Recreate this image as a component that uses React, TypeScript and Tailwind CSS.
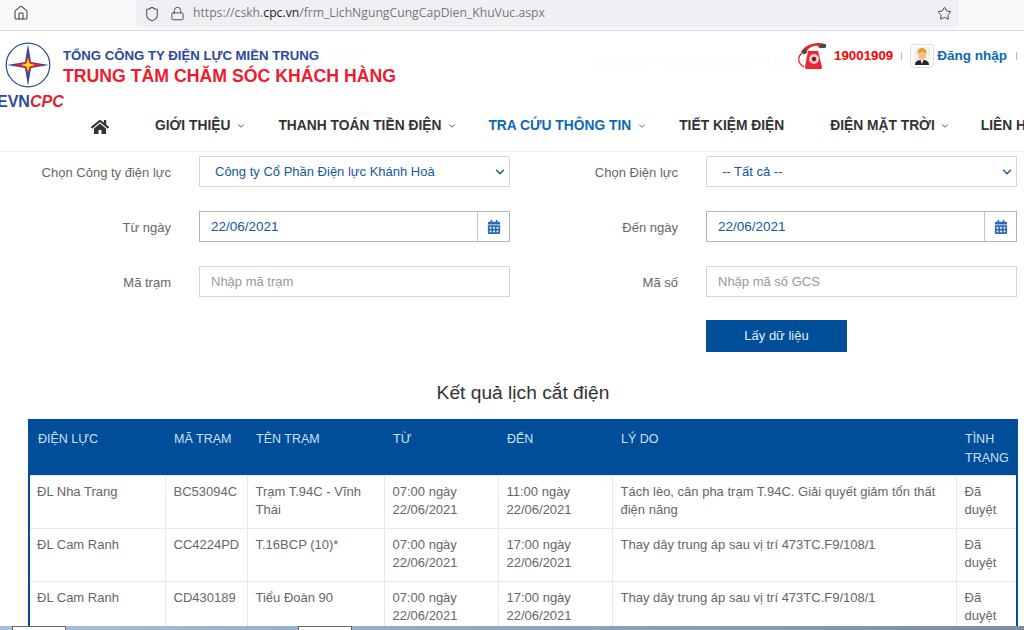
import { ChevronDown, Home, Lock, Shield, Star } from "lucide-react";
import { FaCalendarAlt, FaHome } from "react-icons/fa";

const rows = [
  {
    unit: "ĐL Nha Trang",
    code: "BC53094C",
    name: "Trạm T.94C - Vĩnh Thái",
    from: "07:00",
    to: "11:00",
    reason: "Tách lèo, cân pha trạm T.94C. Giải quyết giảm tổn thất điện năng",
  },
  {
    unit: "ĐL Cam Ranh",
    code: "CC4224PD",
    name: "T.16BCP (10)*",
    from: "07:00",
    to: "17:00",
    reason: "Thay dây trung áp sau vị trí 473TC.F9/108/1",
  },
  {
    unit: "ĐL Cam Ranh",
    code: "CD430189",
    name: "Tiểu Đoàn 90",
    from: "07:00",
    to: "17:00",
    reason: "Thay dây trung áp sau vị trí 473TC.F9/108/1",
  },
];

const Logo = () => (
  <svg width="46" height="46" viewBox="0 0 46 46" className="block shrink-0">
    <circle cx="23" cy="23" r="21.8" fill="#fff" stroke="#2f5597" strokeWidth="1.3" />
    <polygon points="23,2 26,20 44,23 26,26 23,44 20,26 2,23 20,20" fill="#2b4a9b" />
    <polygon points="23,13 25.500,20.500 38,23 25.500,25.500 23,33 20.500,25.500 8,23 20.500,20.500" fill="#e5202e" />
    <polygon points="23,16 24.500,21.500 30,23 24.500,24.500 23,30 21.500,24.500 16,23 21.500,21.500" fill="#ffdd17" />
  </svg>
);

const Phone = () => (
  <svg width="29" height="28" viewBox="0 0 29 28" className="shrink-0">
    <path d="M3 10C7 3 17 -1 27 2l0 3-6 1-1-2C15 3 10 6 8 11Z" fill="#e8222e" />
    <rect x="4" y="8" width="5" height="4" rx="1" fill="#4b4b4b" transform="rotate(-25 6 10)" />
    <rect x="22" y="2" width="6" height="4" rx="1" fill="#4b4b4b" />
    <path d="M4 11C-1 15 0 22 6 25" fill="none" stroke="#e8222e" strokeWidth="1.2" />
    <path d="M10 9h10l4 16c0 2-1 2-2 2H9c-1 0-2 0-2-2Z" fill="#ea2430" />
    <circle cx="16" cy="17" r="5" fill="#f6c4c4" />
    <circle cx="16" cy="17" r="2.200" fill="#7c1d1d" />
  </svg>
);

const Avatar = () => (
  <div className="flex h-6 w-6 items-center justify-center rounded border border-[#ddd] bg-white">
    <svg width="16" height="18" viewBox="0 0 16 18">
      <rect x="0" y="0" width="16" height="18" fill="#f3f1ea" />
      <path d="M1 18c0-4 3-5 7-5s7 1 7 5Z" fill="#22262c" />
      <path d="M6.500 13h3L8 17Z" fill="#fff" />
      <ellipse cx="8" cy="8" rx="4" ry="5" fill="#f3c08c" />
      <path d="M3.500 7C3 2 6 1 8 1s5 1 4.500 6C11 4 5 4 3.500 7Z" fill="#e0a02a" />
    </svg>
  </div>
);

const Field = ({ label, width, children }: { label: string; width: string; children: React.ReactNode }) => (
  <div className="flex items-center">
    <label className={`${width} shrink-0 pr-7 pt-[3px] text-right text-[#666]`}>{label}</label>
    {children}
  </div>
);

const SelectBox = ({ value }: { value: string }) => (
  <div className="flex h-[31px] w-[311px] items-center justify-between border border-[#d6d6d6] pl-[15px] pr-[2px] text-[#14589f]">
    <span className="pt-[2px]">{value}</span>
    <ChevronDown size={14} strokeWidth={2.5} className="text-[#1f5a96]" />
  </div>
);

const DateBox = ({ value }: { value: string }) => (
  <div className="flex h-[31px] w-[311px] items-center border border-[#b4b4b4] text-[13.500px] text-[#14589f]">
    <span className="flex-1 pl-[11px] pt-[2px]">{value}</span>
    <span className="flex h-full w-8 items-center justify-center border-l border-[#c4c4c4]">
      <FaCalendarAlt size={14} className="text-[#2a6cb0]" />
    </span>
  </div>
);

const TextBox = ({ placeholder }: { placeholder: string }) => (
  <input
    placeholder={placeholder}
    className="h-[31px] w-[311px] border border-[#d6d6d6] px-[11px] outline-none placeholder:text-[#999]"
  />
);

const Th = ({ children }: { children: React.ReactNode }) => (
  <th className="px-[9px] pt-[11px] align-top text-[12.500px] leading-[18.500px] font-normal text-[#cfe0f2] first:pl-2">{children}</th>
);

const Td = ({ children }: { children: React.ReactNode }) => (
  <td className="border border-[#e8e8e8] px-2 pt-[7px] align-top first:pl-[7px]">{children}</td>
);

export default function App() {
  return (
    <div className="flex h-[630px] w-[1024px] flex-col overflow-hidden bg-white font-['Liberation_Sans',Arial,sans-serif] text-[13px] leading-[18.500px]">
      <div className="flex h-[31px] shrink-0 items-start border-b border-[#dcdcde] bg-[#f9f9fb] pl-[13px]">
        <Home size={16} strokeWidth={1.6} className="mt-[5px] text-[#444]" />
        <div className="ml-[107px] flex h-[27px] w-[823px] items-center rounded-b bg-[#f0f0f4] pl-2 pr-[7px] font-['Open_Sans',sans-serif] text-[12.200px] text-[#777]">
          <Shield size={16} strokeWidth={1.6} className="text-[#555]" />
          <Lock size={15} strokeWidth={1.6} className="ml-[10px] text-[#555]" />
          <span className="ml-2 flex-1">
            https://cskh.<span className="text-[#222]">cpc.vn</span>/frm_LichNgungCungCapDien_KhuVuc.aspx
          </span>
          <Star size={15} strokeWidth={1.6} className="text-[#444]" />
        </div>
      </div>

      <div className="relative flex h-[74px] shrink-0 pl-[5px] pt-[11px]">
        <span className="absolute left-[5px] top-[20px] text-[16px] whitespace-nowrap text-[#fffbf9]">
          LỊCH NGỪNG CUNG CẤP ĐIỆN THEO KHU VỰC
        </span>
        <span className="absolute left-[589px] top-[22px] whitespace-nowrap text-[#fcfcfc]">
          Trang chủ / Tra cứu thông tin / Lịch ngừng cung cấp / Điện theo khu vực
        </span>
        <div className="relative w-[46px]">
          <Logo />
          <div className="ml-[-8px] mt-[5px] text-[16px] leading-[18px] font-bold whitespace-nowrap text-[#2b4a9b]">
            EVN<span className="text-[#e5202e] italic">CPC</span>
          </div>
        </div>
        <div className="relative ml-3 mt-[5px] whitespace-nowrap">
          <div className="text-[13.200px] leading-[18px] font-bold text-[#2b4a9b]">TỔNG CÔNG TY ĐIỆN LỰC MIỀN TRUNG</div>
          <div className="text-[17.700px] leading-[22px] font-bold text-[#ed1c2e]">TRUNG TÂM CHĂM SÓC KHÁCH HÀNG</div>
        </div>
        <div className="relative ml-auto mr-[7px] flex h-7 items-center">
          <Phone />
          <span className="ml-[7px] text-[13.300px] font-bold text-[#f00]">19001909</span>
          <span className="ml-2 h-2 w-px bg-[#bbb]" />
          <span className="ml-2">
            <Avatar />
          </span>
          <span className="ml-[3px] text-[13.500px] font-bold text-[#0a6ab5]">Đăng nhập</span>
          <span className="ml-[9px] h-2 w-px bg-[#bbb]" />
        </div>
      </div>

      <div className="flex h-[47px] shrink-0 items-start border-b border-[#eee] pl-[91px] pt-[12px] text-[13.800px] font-bold whitespace-nowrap text-[#333]">
        <FaHome size={18} className="mt-[1px] shrink-0" />
        <span className="ml-[46px] shrink-0">GIỚI THIỆU</span>
        <ChevronDown size={10} className="ml-[6px] mt-1 shrink-0" />
        <span className="ml-[32px] shrink-0">THANH TOÁN TIỀN ĐIỆN</span>
        <ChevronDown size={10} className="ml-[6px] mt-1 shrink-0" />
        <span className="ml-[31px] shrink-0 text-[#0a6ab5]">TRA CỨU THÔNG TIN</span>
        <ChevronDown size={10} className="ml-[6px] mt-1 shrink-0 text-[#0a6ab5]" />
        <span className="ml-[32px] shrink-0">TIẾT KIỆM ĐIỆN</span>
        <span className="ml-[46px] shrink-0">ĐIỆN MẶT TRỜI</span>
        <ChevronDown size={10} className="ml-[5px] mt-1 shrink-0" />
        <span className="ml-[31px] shrink-0">LIÊN HỆ</span>
      </div>

      <div className="min-h-0 flex-1 overflow-hidden pt-[4px]">
        <div className="flex flex-col gap-6">
          <div className="flex">
            <Field label="Chọn Công ty điện lực" width="w-[199px]">
              <SelectBox value="Công ty Cổ Phần Điện lực Khánh Hoà" />
            </Field>
            <Field label="Chọn Điện lực" width="w-[196px]">
              <SelectBox value="-- Tất cả --" />
            </Field>
          </div>
          <div className="flex">
            <Field label="Từ ngày" width="w-[199px]">
              <DateBox value="22/06/2021" />
            </Field>
            <Field label="Đến ngày" width="w-[196px]">
              <DateBox value="22/06/2021" />
            </Field>
          </div>
          <div className="flex">
            <Field label="Mã trạm" width="w-[199px]">
              <TextBox placeholder="Nhập mã trạm" />
            </Field>
            <Field label="Mã số" width="w-[196px]">
              <TextBox placeholder="Nhập mã số GCS" />
            </Field>
          </div>
        </div>

        <button className="ml-[706px] mt-[23px] block h-[32px] w-[141px] bg-[#004e9a] text-[#e3edf7]">Lấy dữ liệu</button>

        <h2 className="ml-[22px] mt-[29px] text-center text-[19.200px] leading-[24px] text-[#333]">Kết quả lịch cắt điện</h2>

        <table className="ml-[28px] mt-[14px] w-[990px] table-fixed border-collapse border-l-2 border-r-2 border-[#004e9a]">
          <colgroup>
            <col className="w-[136px]" />
            <col className="w-[82px]" />
            <col className="w-[137px]" />
            <col className="w-[114px]" />
            <col className="w-[114px]" />
            <col className="w-[344px]" />
            <col className="w-[61px]" />
          </colgroup>
          <thead>
            <tr className="h-[56px] bg-[#004e9a] text-left">
              <Th>ĐIỆN LỰC</Th>
              <Th>MÃ TRẠM</Th>
              <Th>TÊN TRẠM</Th>
              <Th>TỪ</Th>
              <Th>ĐẾN</Th>
              <Th>LÝ DO</Th>
              <Th>TÌNH TRẠNG</Th>
            </tr>
          </thead>
          <tbody className="text-[#666]">
            {rows.map((row) => (
              <tr key={row.code} className="h-[53px]">
                <Td>{row.unit}</Td>
                <Td>{row.code}</Td>
                <Td>{row.name}</Td>
                <Td>
                  {row.from} ngày
                  <br />
                  22/06/2021
                </Td>
                <Td>
                  {row.to} ngày
                  <br />
                  22/06/2021
                </Td>
                <Td>{row.reason}</Td>
                <Td>Đã duyệt</Td>
              </tr>
            ))}
          </tbody>
        </table>
      </div>

      <div className="flex h-[4px] shrink-0 bg-linear-to-r from-[#a6c0dc] to-[#7b8ea3]">
        <div className="ml-3 w-[54px] border border-b-0 border-[#666] bg-white" />
        <div className="ml-[232px] w-[54px] border border-b-0 border-[#666] bg-white" />
      </div>
    </div>
  );
}
